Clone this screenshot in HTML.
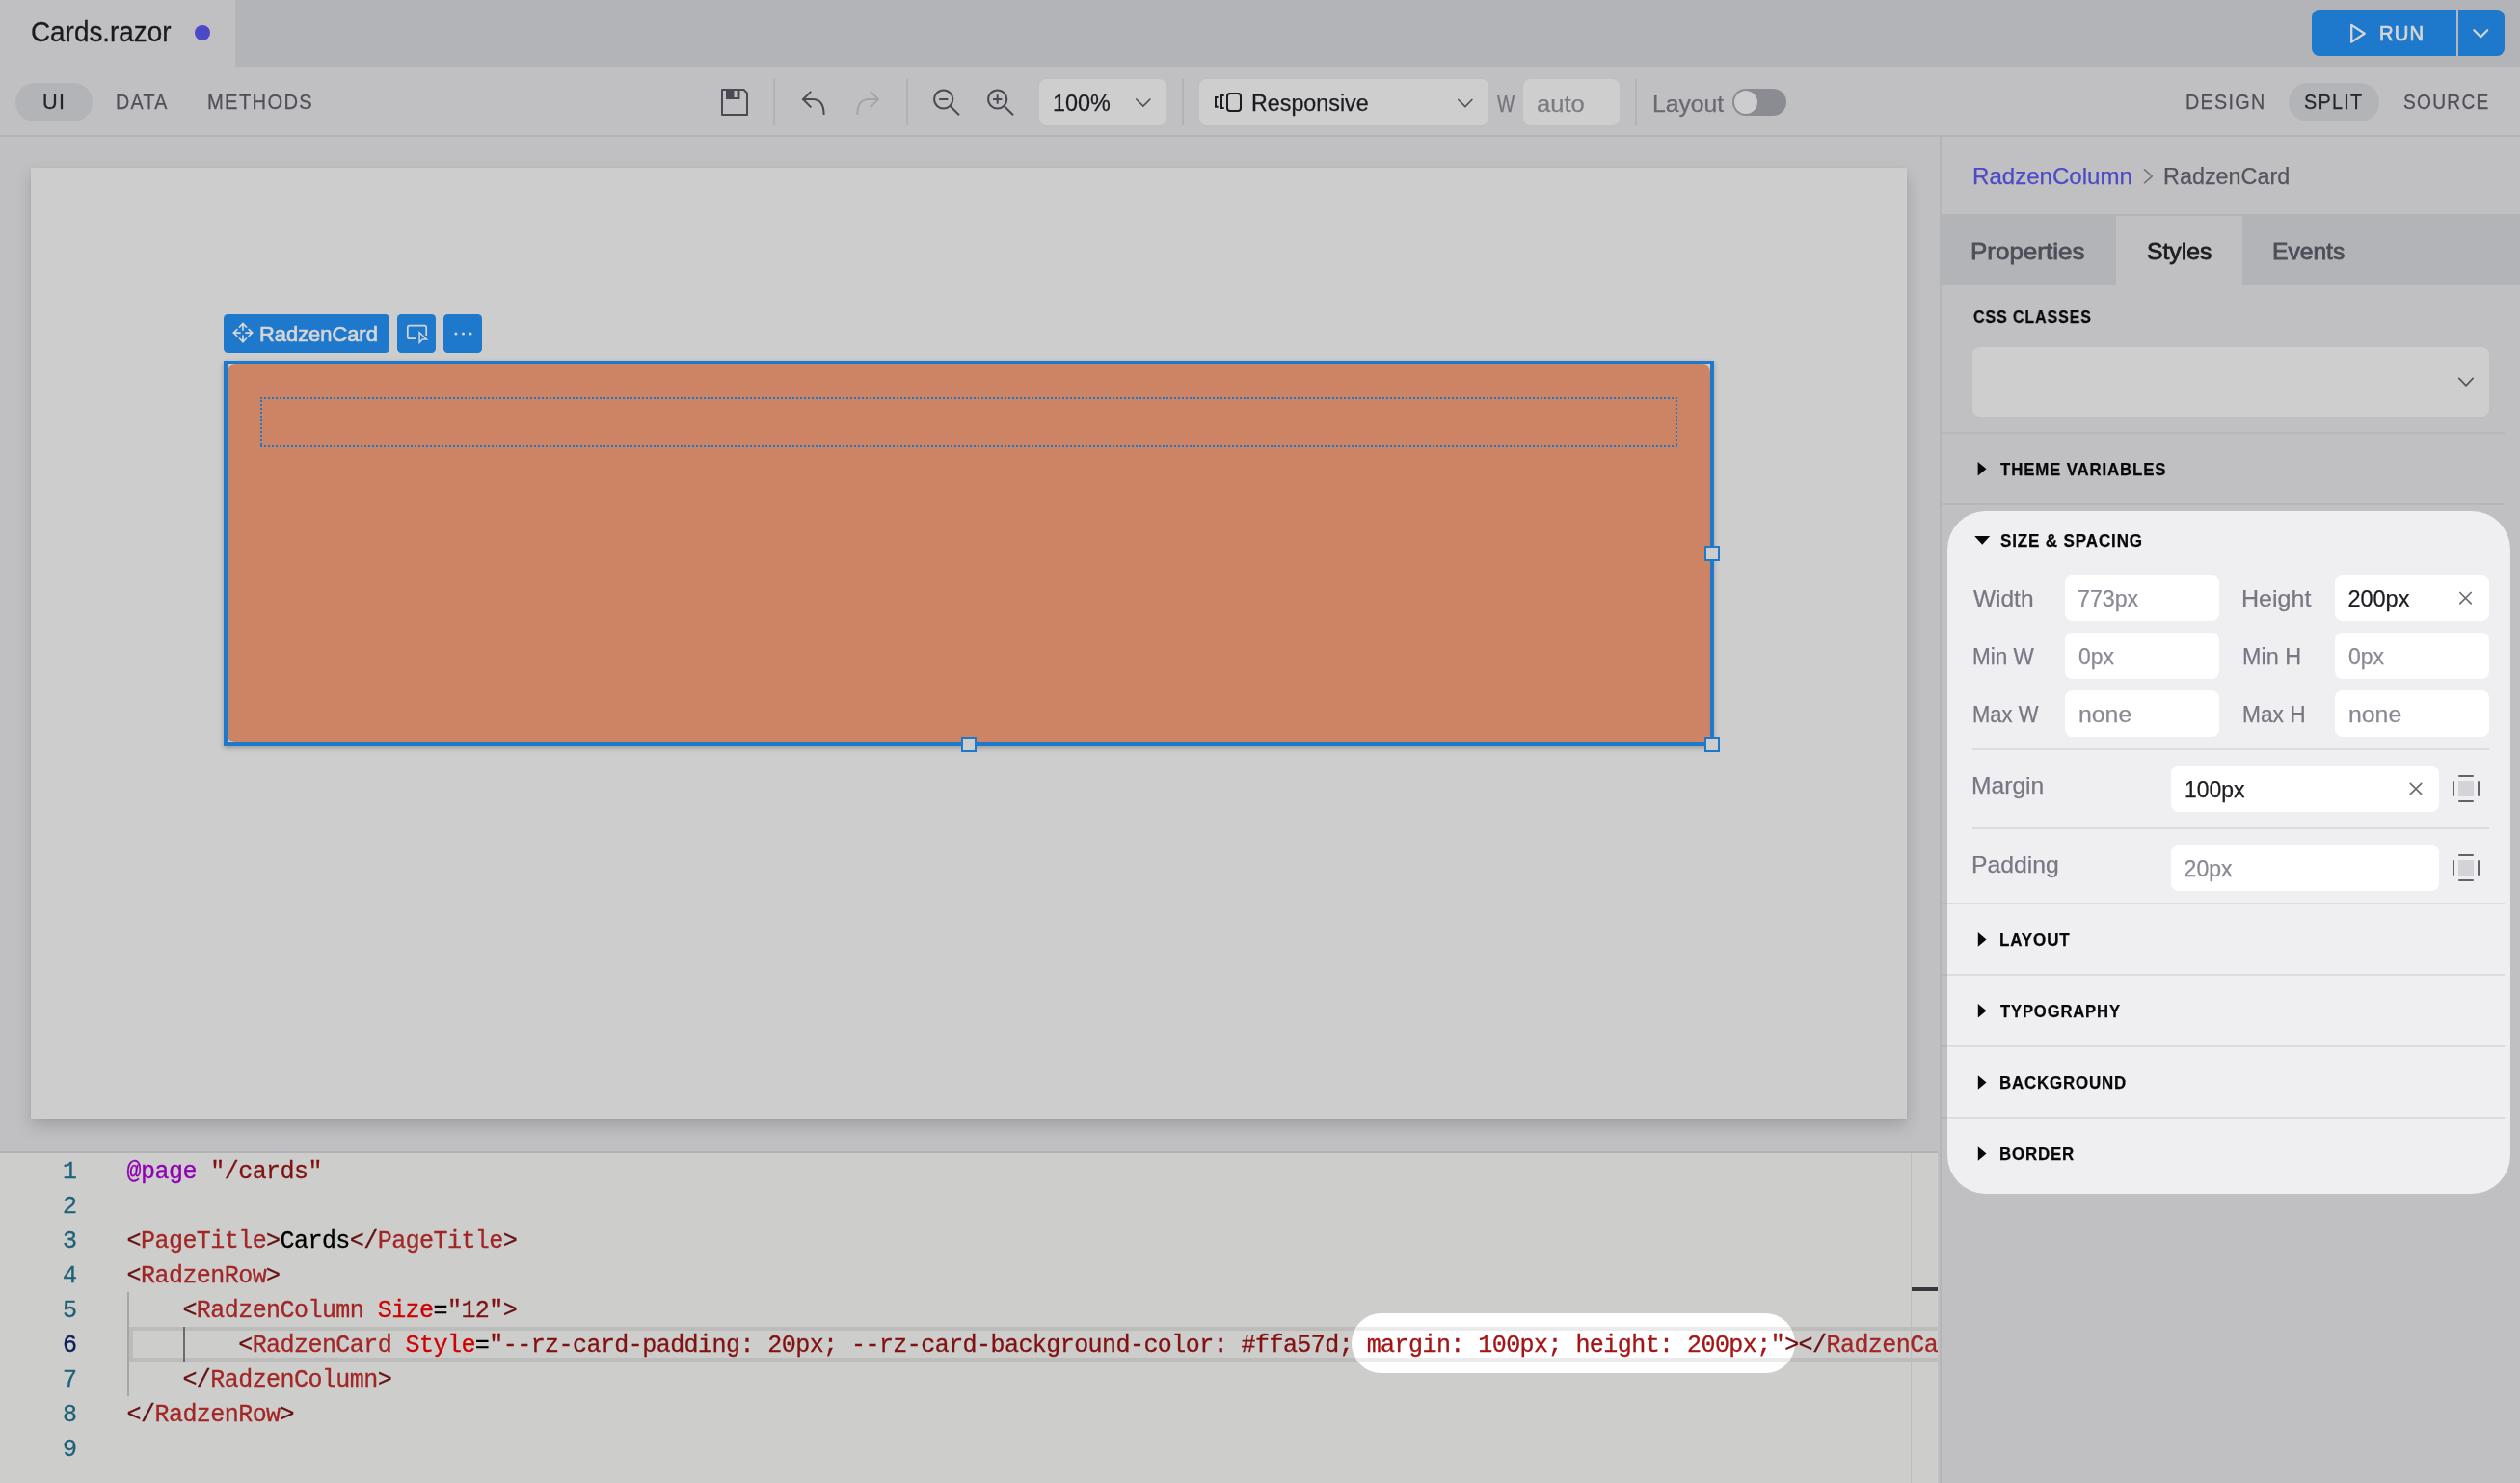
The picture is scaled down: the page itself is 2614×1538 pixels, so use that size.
<!DOCTYPE html>
<html><head><meta charset="utf-8"><title>Cards.razor</title><style>
html,body{margin:0;padding:0;}
body{width:2614px;height:1538px;overflow:hidden;background:#c0c0c3;position:relative;font-family:'Liberation Sans', sans-serif;}
#root{position:absolute;left:0;top:0;width:2614px;height:1538px;overflow:hidden;will-change:transform;}
#root div,#root svg,#root span.t{position:absolute;box-sizing:border-box;}
span.t{white-space:pre;transform-origin:0 50%;display:block;-webkit-text-stroke:0.25px currentColor;}
</style></head><body><div id="root">
<div style="left:0px;top:0px;width:2614px;height:70px;background:#b3b4b7;"></div>
<div style="left:0px;top:0px;width:244px;height:70px;background:#c0c0c3;"></div>
<span class="t" style="left:31.94px;top:19.00px;font:400 29px/29px 'Liberation Sans', sans-serif;color:#1b1b1f;-webkit-text-stroke:0.3px currentColor;transform:scaleX(0.9607);">Cards.razor</span>
<div style="left:202px;top:26px;width:16px;height:16px;background:#4b49c6;border-radius:50%;"></div>
<div style="left:2398px;top:10px;width:200px;height:48px;background:#1e78cb;border-radius:8px;"></div>
<div style="left:2548px;top:10px;width:2px;height:48px;background:#b5b6b9;"></div>
<span class="t" style="left:2467.66px;top:25.00px;font:400 21.5px/21.5px 'Liberation Sans', sans-serif;color:#d6d6d6;letter-spacing:1.2px;-webkit-text-stroke:0.7px currentColor;transform:scaleX(0.9429);">RUN</span>
<div style="left:0px;top:70px;width:2614px;height:70px;background:#c0c0c3;"></div>
<div style="left:0px;top:140px;width:2614px;height:2px;background:#b4b5b9;"></div>
<div style="left:16px;top:86px;width:80px;height:40px;background:#b3b4b7;border-radius:20px;"></div>
<span class="t" style="left:44.01px;top:95.00px;font:400 22px/22px 'Liberation Sans', sans-serif;color:#26262b;letter-spacing:1.4px;transform:scaleX(0.9865);">UI</span>
<span class="t" style="left:120.08px;top:96.00px;font:400 21.5px/21.5px 'Liberation Sans', sans-serif;color:#50505a;letter-spacing:1.4px;transform:scaleX(0.9171);">DATA</span>
<span class="t" style="left:215.06px;top:96.00px;font:400 21.5px/21.5px 'Liberation Sans', sans-serif;color:#50505a;letter-spacing:1.4px;transform:scaleX(0.9384);">METHODS</span>
<div style="left:802px;top:82px;width:2px;height:48px;background:#b1b2b6;"></div>
<div style="left:940px;top:82px;width:2px;height:48px;background:#b1b2b6;"></div>
<div style="left:1226px;top:82px;width:2px;height:48px;background:#b1b2b6;"></div>
<div style="left:1696px;top:82px;width:2px;height:48px;background:#b1b2b6;"></div>
<div style="left:1078px;top:82px;width:132px;height:48px;background:#cecece;border-radius:8px;"></div>
<span class="t" style="left:1092.00px;top:96.00px;font:400 23.5px/23.5px 'Liberation Sans', sans-serif;color:#1c1c21;transform:scaleX(0.9965);">100%</span>
<div style="left:1244px;top:82px;width:300px;height:48px;background:#cecece;border-radius:8px;"></div>
<span class="t" style="left:1298.41px;top:96.00px;font:400 23.5px/23.5px 'Liberation Sans', sans-serif;color:#1c1c21;transform:scaleX(0.9908);">Responsive</span>
<span class="t" style="left:1552.80px;top:97.00px;font:400 23px/23px 'Liberation Sans', sans-serif;color:#74747c;transform:scaleX(0.8409);">W</span>
<div style="left:1580px;top:82px;width:100px;height:48px;background:#cecece;border-radius:8px;"></div>
<span class="t" style="left:1593.96px;top:96.00px;font:400 24.5px/24.5px 'Liberation Sans', sans-serif;color:#7b7b84;transform:scaleX(1.0422);">auto</span>
<span class="t" style="left:1713.98px;top:96.00px;font:400 24.5px/24.5px 'Liberation Sans', sans-serif;color:#696972;transform:scaleX(1.0090);">Layout</span>
<div style="left:1797px;top:92px;width:56px;height:28px;background:#8b8c91;border-radius:14px;"></div>
<div style="left:1799px;top:94px;width:24px;height:24px;background:#cdcdcd;border-radius:50%;"></div>
<span class="t" style="left:2266.88px;top:96.00px;font:400 21.5px/21.5px 'Liberation Sans', sans-serif;color:#50505a;letter-spacing:1.4px;transform:scaleX(0.9194);">DESIGN</span>
<div style="left:2374px;top:86px;width:94px;height:40px;background:#b3b4b7;border-radius:20px;"></div>
<span class="t" style="left:2390.00px;top:96.00px;font:400 21.5px/21.5px 'Liberation Sans', sans-serif;color:#26262b;letter-spacing:1.4px;transform:scaleX(0.9201);">SPLIT</span>
<span class="t" style="left:2492.80px;top:96.00px;font:400 21.5px/21.5px 'Liberation Sans', sans-serif;color:#50505a;letter-spacing:1.4px;transform:scaleX(0.8921);">SOURCE</span>
<div style="left:32px;top:174px;width:1946px;height:986px;background:#cdcdcd;box-shadow:0 8px 16px rgba(0,0,0,.16),0 1px 4px rgba(0,0,0,.07);"></div>
<div style="left:232px;top:326px;width:172px;height:40px;background:#1e78cb;border-radius:4.5px;"></div>
<div style="left:412px;top:326px;width:40px;height:40px;background:#1e78cb;border-radius:4.5px;"></div>
<div style="left:460px;top:326px;width:40px;height:40px;background:#1e78cb;border-radius:4.5px;"></div>
<span class="t" style="left:269.31px;top:336.00px;font:400 22px/22px 'Liberation Sans', sans-serif;color:#d6d6d6;-webkit-text-stroke:0.7px currentColor;transform:scaleX(0.9944);">RadzenCard</span>
<div style="left:232px;top:374px;width:1546px;height:400px;background:#cdcdcd;box-shadow:0 2px 5px rgba(0,0,0,.25);"></div>
<div style="left:236px;top:378px;width:1538px;height:392px;background:#cc8464;border-radius:8px;"></div>
<div style="left:232px;top:374px;width:1546px;height:400px;background:transparent;border:4px solid #1e78cb;"></div>
<div style="left:270px;top:412px;width:1470px;height:52px;background:transparent;border:2px dotted #1e78cb;"></div>
<div style="left:1768px;top:566px;width:16px;height:16px;background:#cdcdcd;border:2px solid #1e78cb;"></div>
<div style="left:1768px;top:764px;width:16px;height:16px;background:#cdcdcd;border:2px solid #1e78cb;"></div>
<div style="left:997px;top:764px;width:16px;height:16px;background:#cdcdcd;border:2px solid #1e78cb;"></div>
<div style="left:0;top:0;width:2010px;height:1538px;overflow:hidden;">
<div style="left:0px;top:1194px;width:2010px;height:2px;background:#b1b2b6;"></div>
<div style="left:0px;top:1196px;width:2010px;height:342px;background:#cdcdcb;"></div>
<div style="left:1982px;top:1196px;width:1px;height:342px;background:#bcbcba;"></div>
<div style="left:1983px;top:1335px;width:27px;height:4px;background:#38383c;"></div>
<div style="left:134px;top:1376px;width:1880px;height:36px;background:transparent;border:4px solid #bcbcbb;"></div>
<div style="left:132px;top:1340px;width:2px;height:108px;background:#a6a6a5;"></div>
<div style="left:190px;top:1376px;width:2px;height:36px;background:#6b6b70;"></div>
<div style="left:1402px;top:1362px;width:460px;height:62px;background:#fff;border-radius:31px;overflow:hidden;"><div style="left:0;top:14px;width:460px;height:4px;background:#ebebeb"></div><div style="left:0;top:46px;width:460px;height:4px;background:#ebebeb"></div></div>
<span class="t" style="left:65.05px;top:1203.00px;font:400 25px/25px 'Liberation Mono', monospace;color:#1d6279;letter-spacing:-0.553px;-webkit-text-stroke:0.3px currentColor;">1</span>
<span class="t" style="left:65.05px;top:1239.00px;font:400 25px/25px 'Liberation Mono', monospace;color:#1d6279;letter-spacing:-0.553px;-webkit-text-stroke:0.3px currentColor;">2</span>
<span class="t" style="left:65.05px;top:1275.00px;font:400 25px/25px 'Liberation Mono', monospace;color:#1d6279;letter-spacing:-0.553px;-webkit-text-stroke:0.3px currentColor;">3</span>
<span class="t" style="left:65.05px;top:1311.00px;font:400 25px/25px 'Liberation Mono', monospace;color:#1d6279;letter-spacing:-0.553px;-webkit-text-stroke:0.3px currentColor;">4</span>
<span class="t" style="left:65.05px;top:1347.00px;font:400 25px/25px 'Liberation Mono', monospace;color:#1d6279;letter-spacing:-0.553px;-webkit-text-stroke:0.3px currentColor;">5</span>
<span class="t" style="left:65.05px;top:1383.00px;font:400 25px/25px 'Liberation Mono', monospace;color:#0a1c5c;letter-spacing:-0.553px;-webkit-text-stroke:0.3px currentColor;">6</span>
<span class="t" style="left:65.05px;top:1419.00px;font:400 25px/25px 'Liberation Mono', monospace;color:#1d6279;letter-spacing:-0.553px;-webkit-text-stroke:0.3px currentColor;">7</span>
<span class="t" style="left:65.05px;top:1455.00px;font:400 25px/25px 'Liberation Mono', monospace;color:#1d6279;letter-spacing:-0.553px;-webkit-text-stroke:0.3px currentColor;">8</span>
<span class="t" style="left:65.05px;top:1491.00px;font:400 25px/25px 'Liberation Mono', monospace;color:#1d6279;letter-spacing:-0.553px;-webkit-text-stroke:0.3px currentColor;">9</span>
<span class="t" style="left:131.60px;top:1203.00px;font:400 25px/25px 'Liberation Mono', monospace;color:#9000b4;letter-spacing:-0.553px;-webkit-text-stroke:0.3px currentColor;">@page</span>
<span class="t" style="left:218.30px;top:1203.00px;font:400 25px/25px 'Liberation Mono', monospace;color:#801212;letter-spacing:-0.553px;-webkit-text-stroke:0.3px currentColor;">&quot;/cards&quot;</span>
<span class="t" style="left:131.60px;top:1275.00px;font:400 25px/25px 'Liberation Mono', monospace;color:#661010;letter-spacing:-0.553px;-webkit-text-stroke:0.3px currentColor;">&lt;</span>
<span class="t" style="left:146.05px;top:1275.00px;font:400 25px/25px 'Liberation Mono', monospace;color:#a32626;letter-spacing:-0.553px;-webkit-text-stroke:0.3px currentColor;">PageTitle</span>
<span class="t" style="left:276.10px;top:1275.00px;font:400 25px/25px 'Liberation Mono', monospace;color:#661010;letter-spacing:-0.553px;-webkit-text-stroke:0.3px currentColor;">&gt;</span>
<span class="t" style="left:290.55px;top:1275.00px;font:400 25px/25px 'Liberation Mono', monospace;color:#000000;letter-spacing:-0.553px;-webkit-text-stroke:0.3px currentColor;">Cards</span>
<span class="t" style="left:362.80px;top:1275.00px;font:400 25px/25px 'Liberation Mono', monospace;color:#661010;letter-spacing:-0.553px;-webkit-text-stroke:0.3px currentColor;">&lt;/</span>
<span class="t" style="left:391.70px;top:1275.00px;font:400 25px/25px 'Liberation Mono', monospace;color:#a32626;letter-spacing:-0.553px;-webkit-text-stroke:0.3px currentColor;">PageTitle</span>
<span class="t" style="left:521.75px;top:1275.00px;font:400 25px/25px 'Liberation Mono', monospace;color:#661010;letter-spacing:-0.553px;-webkit-text-stroke:0.3px currentColor;">&gt;</span>
<span class="t" style="left:131.60px;top:1311.00px;font:400 25px/25px 'Liberation Mono', monospace;color:#661010;letter-spacing:-0.553px;-webkit-text-stroke:0.3px currentColor;">&lt;</span>
<span class="t" style="left:146.05px;top:1311.00px;font:400 25px/25px 'Liberation Mono', monospace;color:#a32626;letter-spacing:-0.553px;-webkit-text-stroke:0.3px currentColor;">RadzenRow</span>
<span class="t" style="left:276.10px;top:1311.00px;font:400 25px/25px 'Liberation Mono', monospace;color:#661010;letter-spacing:-0.553px;-webkit-text-stroke:0.3px currentColor;">&gt;</span>
<span class="t" style="left:189.40px;top:1347.00px;font:400 25px/25px 'Liberation Mono', monospace;color:#661010;letter-spacing:-0.553px;-webkit-text-stroke:0.3px currentColor;">&lt;</span>
<span class="t" style="left:203.85px;top:1347.00px;font:400 25px/25px 'Liberation Mono', monospace;color:#a32626;letter-spacing:-0.553px;-webkit-text-stroke:0.3px currentColor;">RadzenColumn</span>
<span class="t" style="left:391.70px;top:1347.00px;font:400 25px/25px 'Liberation Mono', monospace;color:#cf0000;letter-spacing:-0.553px;-webkit-text-stroke:0.3px currentColor;">Size</span>
<span class="t" style="left:449.50px;top:1347.00px;font:400 25px/25px 'Liberation Mono', monospace;color:#000000;letter-spacing:-0.553px;-webkit-text-stroke:0.3px currentColor;">=</span>
<span class="t" style="left:463.95px;top:1347.00px;font:400 25px/25px 'Liberation Mono', monospace;color:#801212;letter-spacing:-0.553px;-webkit-text-stroke:0.3px currentColor;">&quot;12&quot;</span>
<span class="t" style="left:521.75px;top:1347.00px;font:400 25px/25px 'Liberation Mono', monospace;color:#661010;letter-spacing:-0.553px;-webkit-text-stroke:0.3px currentColor;">&gt;</span>
<span class="t" style="left:247.20px;top:1383.00px;font:400 25px/25px 'Liberation Mono', monospace;color:#661010;letter-spacing:-0.553px;-webkit-text-stroke:0.3px currentColor;">&lt;</span>
<span class="t" style="left:261.65px;top:1383.00px;font:400 25px/25px 'Liberation Mono', monospace;color:#a32626;letter-spacing:-0.553px;-webkit-text-stroke:0.3px currentColor;">RadzenCard</span>
<span class="t" style="left:420.60px;top:1383.00px;font:400 25px/25px 'Liberation Mono', monospace;color:#cf0000;letter-spacing:-0.553px;-webkit-text-stroke:0.3px currentColor;">Style</span>
<span class="t" style="left:492.85px;top:1383.00px;font:400 25px/25px 'Liberation Mono', monospace;color:#000000;letter-spacing:-0.553px;-webkit-text-stroke:0.3px currentColor;">=</span>
<span class="t" style="left:507.30px;top:1383.00px;font:400 25px/25px 'Liberation Mono', monospace;color:#801212;letter-spacing:-0.553px;-webkit-text-stroke:0.3px currentColor;">&quot;--rz-card-padding: 20px; --rz-card-background-color: #ffa57d;</span>
<span class="t" style="left:1417.65px;top:1383.00px;font:400 25px/25px 'Liberation Mono', monospace;color:#a31515;letter-spacing:-0.553px;-webkit-text-stroke:0.3px currentColor;">margin: 100px; height: 200px;&quot;</span>
<span class="t" style="left:1851.15px;top:1383.00px;font:400 25px/25px 'Liberation Mono', monospace;color:#7a0808;letter-spacing:-0.553px;-webkit-text-stroke:0.3px currentColor;">&gt;</span>
<span class="t" style="left:1865.60px;top:1383.00px;font:400 25px/25px 'Liberation Mono', monospace;color:#661010;letter-spacing:-0.553px;-webkit-text-stroke:0.3px currentColor;">&lt;/</span>
<span class="t" style="left:1894.50px;top:1383.00px;font:400 25px/25px 'Liberation Mono', monospace;color:#a32626;letter-spacing:-0.553px;-webkit-text-stroke:0.3px currentColor;">RadzenCard</span>
<span class="t" style="left:2039.00px;top:1383.00px;font:400 25px/25px 'Liberation Mono', monospace;color:#661010;letter-spacing:-0.553px;-webkit-text-stroke:0.3px currentColor;">&gt;</span>
<span class="t" style="left:189.40px;top:1419.00px;font:400 25px/25px 'Liberation Mono', monospace;color:#661010;letter-spacing:-0.553px;-webkit-text-stroke:0.3px currentColor;">&lt;/</span>
<span class="t" style="left:218.30px;top:1419.00px;font:400 25px/25px 'Liberation Mono', monospace;color:#a32626;letter-spacing:-0.553px;-webkit-text-stroke:0.3px currentColor;">RadzenColumn</span>
<span class="t" style="left:391.70px;top:1419.00px;font:400 25px/25px 'Liberation Mono', monospace;color:#661010;letter-spacing:-0.553px;-webkit-text-stroke:0.3px currentColor;">&gt;</span>
<span class="t" style="left:131.60px;top:1455.00px;font:400 25px/25px 'Liberation Mono', monospace;color:#661010;letter-spacing:-0.553px;-webkit-text-stroke:0.3px currentColor;">&lt;/</span>
<span class="t" style="left:160.50px;top:1455.00px;font:400 25px/25px 'Liberation Mono', monospace;color:#a32626;letter-spacing:-0.553px;-webkit-text-stroke:0.3px currentColor;">RadzenRow</span>
<span class="t" style="left:290.55px;top:1455.00px;font:400 25px/25px 'Liberation Mono', monospace;color:#661010;letter-spacing:-0.553px;-webkit-text-stroke:0.3px currentColor;">&gt;</span>
</div>
<div style="left:2012px;top:142px;width:2px;height:1396px;background:#b4b5b9;"></div>
<span class="t" style="left:2046.20px;top:171.00px;font:400 24px/24px 'Liberation Sans', sans-serif;color:#4c4ac6;transform:scaleX(1.0032);">RadzenColumn</span>
<span class="t" style="left:2243.81px;top:172.00px;font:400 23.5px/23.5px 'Liberation Sans', sans-serif;color:#55555e;transform:scaleX(0.9949);">RadzenCard</span>
<div style="left:2014px;top:222px;width:600px;height:74px;background:#b3b4b7;"></div>
<div style="left:2195px;top:224px;width:131px;height:72px;background:#c0c0c3;"></div>
<span class="t" style="left:2044.38px;top:249.00px;font:400 24.5px/24.5px 'Liberation Sans', sans-serif;color:#4e4e58;-webkit-text-stroke:0.8px currentColor;transform:scaleX(1.0602);">Properties</span>
<span class="t" style="left:2226.79px;top:249.00px;font:400 24.5px/24.5px 'Liberation Sans', sans-serif;color:#1c1c21;-webkit-text-stroke:0.8px currentColor;transform:scaleX(1.0081);">Styles</span>
<span class="t" style="left:2356.99px;top:249.00px;font:400 24.5px/24.5px 'Liberation Sans', sans-serif;color:#4e4e58;-webkit-text-stroke:0.8px currentColor;transform:scaleX(1.0048);">Events</span>
<span class="t" style="left:2046.50px;top:320.00px;font:700 18px/18px 'Liberation Sans', sans-serif;color:#08080a;letter-spacing:1.0px;transform:scaleX(0.8896);">CSS CLASSES</span>
<div style="left:2046px;top:360px;width:536px;height:72px;background:#cecece;border-radius:8px;"></div>
<div style="left:2014px;top:448px;width:584px;height:2px;background:#b6b7bb;"></div>
<span class="t" style="left:2074.50px;top:478.00px;font:700 18px/18px 'Liberation Sans', sans-serif;color:#08080a;letter-spacing:0.9px;transform:scaleX(0.9358);">THEME VARIABLES</span>
<div style="left:2014px;top:522px;width:584px;height:2px;background:#b6b7bb;"></div>
<div style="left:2020px;top:530px;width:584px;height:708px;background:#efeff1;border-radius:40px;"></div>
<span class="t" style="left:2074.70px;top:552.00px;font:700 18px/18px 'Liberation Sans', sans-serif;color:#08080a;letter-spacing:0.9px;transform:scaleX(0.9464);">SIZE &amp; SPACING</span>
<span class="t" style="left:2046.90px;top:609.00px;font:400 24.5px/24.5px 'Liberation Sans', sans-serif;color:#787883;">Width</span>
<div style="left:2142px;top:596px;width:160px;height:48px;background:#ffffff;border-radius:8px;"></div>
<span class="t" style="left:2155.39px;top:610.00px;font:400 23px/23px 'Liberation Sans', sans-serif;color:#8a8a95;transform:scaleX(1.0070);">773px</span>
<span class="t" style="left:2324.85px;top:609.00px;font:400 24.5px/24.5px 'Liberation Sans', sans-serif;color:#787883;transform:scaleX(1.0230);">Height</span>
<div style="left:2422px;top:596px;width:160px;height:48px;background:#ffffff;border-radius:8px;"></div>
<span class="t" style="left:2435.40px;top:610.00px;font:400 23.5px/23.5px 'Liberation Sans', sans-serif;color:#1c1c21;">200px</span>
<span class="t" style="left:2045.92px;top:670.00px;font:400 23px/23px 'Liberation Sans', sans-serif;color:#787883;transform:scaleX(0.9790);">Min W</span>
<div style="left:2142px;top:656px;width:160px;height:48px;background:#ffffff;border-radius:8px;"></div>
<span class="t" style="left:2156.40px;top:670.00px;font:400 23px/23px 'Liberation Sans', sans-serif;color:#8a8a95;transform:scaleX(0.9951);">0px</span>
<span class="t" style="left:2325.90px;top:670.00px;font:400 23.5px/23.5px 'Liberation Sans', sans-serif;color:#787883;transform:scaleX(0.9950);">Min H</span>
<div style="left:2422px;top:656px;width:160px;height:48px;background:#ffffff;border-radius:8px;"></div>
<span class="t" style="left:2436.40px;top:670.00px;font:400 23px/23px 'Liberation Sans', sans-serif;color:#8a8a95;transform:scaleX(0.9951);">0px</span>
<span class="t" style="left:2045.94px;top:730.00px;font:400 23px/23px 'Liberation Sans', sans-serif;color:#787883;transform:scaleX(0.9557);">Max W</span>
<div style="left:2142px;top:716px;width:160px;height:48px;background:#ffffff;border-radius:8px;"></div>
<span class="t" style="left:2155.89px;top:729.00px;font:400 24.5px/24.5px 'Liberation Sans', sans-serif;color:#8a8a95;transform:scaleX(1.0137);">none</span>
<span class="t" style="left:2325.91px;top:730.00px;font:400 23px/23px 'Liberation Sans', sans-serif;color:#787883;transform:scaleX(0.9884);">Max H</span>
<div style="left:2422px;top:716px;width:160px;height:48px;background:#ffffff;border-radius:8px;"></div>
<span class="t" style="left:2435.89px;top:729.00px;font:400 24.5px/24.5px 'Liberation Sans', sans-serif;color:#8a8a95;transform:scaleX(1.0137);">none</span>
<div style="left:2046px;top:776px;width:536px;height:2px;background:#dcdce0;"></div>
<span class="t" style="left:2044.89px;top:803.00px;font:400 24.5px/24.5px 'Liberation Sans', sans-serif;color:#787883;transform:scaleX(1.0047);">Margin</span>
<div style="left:2252px;top:794px;width:278px;height:48px;background:#ffffff;border-radius:8px;"></div>
<span class="t" style="left:2266.00px;top:808.00px;font:400 23px/23px 'Liberation Sans', sans-serif;color:#1c1c21;transform:scaleX(0.9973);">100px</span>
<div style="left:2046px;top:858px;width:536px;height:2px;background:#dcdce0;"></div>
<span class="t" style="left:2044.88px;top:885.00px;font:400 24.5px/24.5px 'Liberation Sans', sans-serif;color:#787883;transform:scaleX(1.0093);">Padding</span>
<div style="left:2252px;top:876px;width:278px;height:48px;background:#ffffff;border-radius:8px;"></div>
<span class="t" style="left:2265.60px;top:890.00px;font:400 23px/23px 'Liberation Sans', sans-serif;color:#8a8a95;">20px</span>
<div style="left:2014px;top:936px;width:6px;height:2px;background:#b6b7bb;"></div>
<div style="left:2020px;top:936px;width:578px;height:2px;background:#dcdce0;"></div>
<div style="left:2014px;top:1010px;width:6px;height:2px;background:#b6b7bb;"></div>
<div style="left:2020px;top:1010px;width:578px;height:2px;background:#dcdce0;"></div>
<div style="left:2014px;top:1084px;width:6px;height:2px;background:#b6b7bb;"></div>
<div style="left:2020px;top:1084px;width:578px;height:2px;background:#dcdce0;"></div>
<div style="left:2014px;top:1158px;width:6px;height:2px;background:#b6b7bb;"></div>
<div style="left:2020px;top:1158px;width:578px;height:2px;background:#dcdce0;"></div>
<span class="t" style="left:2073.75px;top:966.00px;font:700 18px/18px 'Liberation Sans', sans-serif;color:#08080a;letter-spacing:0.9px;transform:scaleX(0.9466);">LAYOUT</span>
<span class="t" style="left:2074.70px;top:1040.00px;font:700 18px/18px 'Liberation Sans', sans-serif;color:#08080a;letter-spacing:0.9px;transform:scaleX(0.9246);">TYPOGRAPHY</span>
<span class="t" style="left:2073.76px;top:1114.00px;font:700 18px/18px 'Liberation Sans', sans-serif;color:#08080a;letter-spacing:0.9px;transform:scaleX(0.9368);">BACKGROUND</span>
<span class="t" style="left:2073.76px;top:1188.00px;font:700 18px/18px 'Liberation Sans', sans-serif;color:#08080a;letter-spacing:0.9px;transform:scaleX(0.9362);">BORDER</span>
<svg style="left:0px;top:0px;pointer-events:none;" width="2614" height="1538" viewBox="0 0 2614 1538" fill="none"><path d="M749 93H771.5L775 96.5V119H749Z" stroke="#4a4a52" stroke-width="2" stroke-linejoin="round"/><rect x="754" y="93" width="12.5" height="9" stroke="#4a4a52" stroke-width="2"/><rect x="754" y="93" width="7.5" height="9" fill="#4a4a52"/><path d="M841.3 94.9L833 103L841.3 111.4M833.5 103H843C851 103 854.6 109 854.6 119" stroke="#4a4a52" stroke-width="2" stroke-linecap="butt" stroke-linejoin="miter"/><path d="M902.7 94.9L911 103L902.7 111.4M910.5 103H901C893 103 889.4 109 889.4 119" stroke="#a3a3a9" stroke-width="2"/><circle cx="978.7" cy="103" r="9.6" stroke="#4a4a52" stroke-width="2"/><path d="M985.8 110.2L995 119.3M974.2 103H983.4" stroke="#4a4a52" stroke-width="2"/><circle cx="1034.7" cy="103" r="9.6" stroke="#4a4a52" stroke-width="2"/><path d="M1041.8 110.2L1051 119.3M1030 103H1039.4M1034.7 98.3V107.7" stroke="#4a4a52" stroke-width="2"/><polyline points="1178.8,103 1185.85,110.2 1192.9,103" stroke="#55555e" stroke-width="1.7" stroke-linecap="round" stroke-linejoin="round"/><rect x="1273" y="97" width="14" height="18" rx="3" stroke="#1c1c21" stroke-width="2"/><path d="M1269.7 99H1267V112H1269.7M1263.6 101H1261V110.8H1263.6" stroke="#1c1c21" stroke-width="2"/><polyline points="1512.8,103.5 1519.85,110.7 1526.9,103.5" stroke="#55555e" stroke-width="1.7" stroke-linecap="round" stroke-linejoin="round"/><path d="M2439.2 25.9L2452.8 34.7L2439.2 43.6Z" stroke="#d6d6d6" stroke-width="2.3" stroke-linejoin="round"/><polyline points="2566.3,31.2 2573.25,38.2 2580.2,31.2" stroke="#d6d6d6" stroke-width="2.2" stroke-linecap="round" stroke-linejoin="round"/><path d="M252 335.8V342.8M252 347.5V354.4M242.6 345.1H249.7M254.3 345.1H261.4M248 339.7L252 335.5L256 339.7M248 350.5L252 354.7L256 350.5M246.4 341.2L242.3 345.1L246.4 349M257.6 341.2L261.7 345.1L257.6 349" stroke="#d6d6d6" stroke-width="1.7" stroke-linecap="butt" stroke-linejoin="miter"/><path d="M431 351.2H424.6Q422.8 351.2 422.8 349.4V339.5Q422.8 337.7 424.6 337.7H440.4Q442.2 337.7 442.2 339.5V347.9" stroke="#d6d6d6" stroke-width="1.7"/><path d="M435.1 344.7V355.3L438.3 351.9H442.5Z" stroke="#d6d6d6" stroke-width="1.5" stroke-linejoin="miter"/><circle cx="472.9" cy="346" r="1.55" fill="#d6d6d6"/><circle cx="480.5" cy="346" r="1.55" fill="#d6d6d6"/><circle cx="488" cy="346" r="1.55" fill="#d6d6d6"/><polyline points="2224.5,175.8 2232.3,182.8 2224.5,189.8" stroke="#74747c" stroke-width="1.6" stroke-linecap="round" stroke-linejoin="round"/><polyline points="2550.8,392.4 2558.0,399.9 2565.2,392.4" stroke="#55555e" stroke-width="1.7" stroke-linecap="round" stroke-linejoin="round"/><polygon points="2051.6,479.0 2060.5,486.2 2051.6,493.4" fill="#08080a"/><polygon points="2048.2,556 2064.2,556 2056.2,564.8" fill="#08080a"/><polygon points="2051.8,967.1 2060.5,974.4 2051.8,981.6999999999999" fill="#08080a"/><polygon points="2051.8,1040.9 2060.5,1048.2 2051.8,1055.5" fill="#08080a"/><polygon points="2051.8,1115.2 2060.5,1122.5 2051.8,1129.8" fill="#08080a"/><polygon points="2051.8,1189.2 2060.5,1196.5 2051.8,1203.8" fill="#08080a"/><path d="M2551.8 614.5L2563.2 625.9000000000001M2563.2 614.5L2551.8 625.9000000000001" stroke="#6c6c76" stroke-width="1.7" stroke-linecap="round"/><path d="M2500.3 812.3L2511.7 823.7M2511.7 812.3L2500.3 823.7" stroke="#6c6c76" stroke-width="1.7" stroke-linecap="round"/><rect x="2550" y="810" width="16" height="16" fill="#d3d3d8"/><path d="M2551 805H2565M2551 831H2565M2545 811V825M2571 811V825" stroke="#62626a" stroke-width="2" stroke-linecap="round"/><rect x="2550" y="892" width="16" height="16" fill="#d3d3d8"/><path d="M2551 887H2565M2551 913H2565M2545 893V907M2571 893V907" stroke="#62626a" stroke-width="2" stroke-linecap="round"/></svg>
</div></body></html>
